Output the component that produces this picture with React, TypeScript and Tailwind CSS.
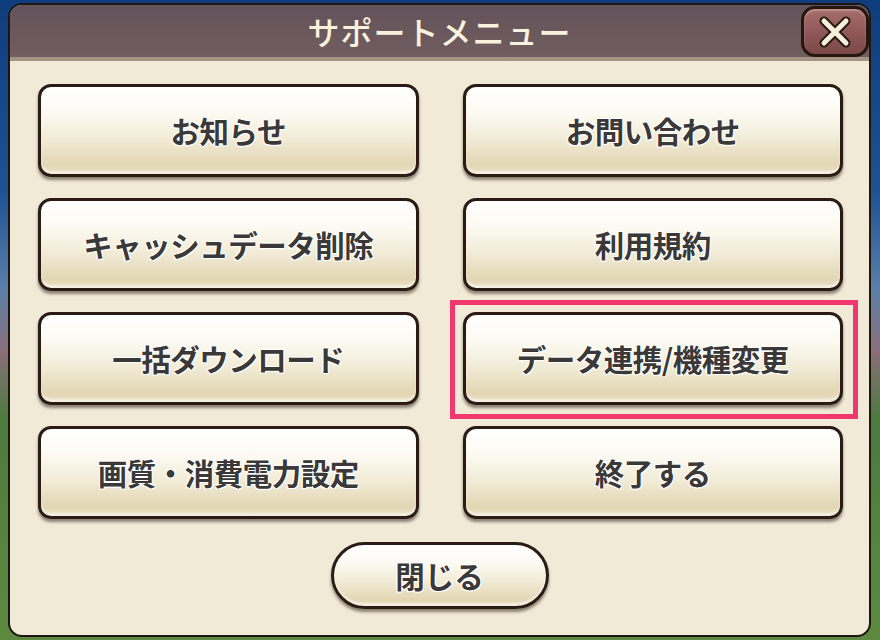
import React from "react";

const font = { fontFamily: '"Noto Sans CJK JP", "Noto Sans", sans-serif' };

const items = [
  "お知らせ",
  "お問い合わせ",
  "キャッシュデータ削除",
  "利用規約",
  "一括ダウンロード",
  "データ連携/機種変更",
  "画質・消費電力設定",
  "終了する",
];

const btnFace =
  "bg-[linear-gradient(to_bottom,#ffffff_0%,#fcfaf2_30%,#f1ebd6_60%,#e2d6b3_90%,#ebe2c8_100%)] border-[3px] border-[#2a1b15] shadow-[0_3px_3px_rgba(40,25,15,0.5),inset_0_-3px_2px_rgba(255,255,255,0.5)]";

const textGlow =
  "[text-shadow:0_0_2px_#fff,1px_1px_0_#fff,-1px_-1px_0_#fff,1px_-1px_0_#fff,-1px_1px_0_#fff]";

function MenuButton({ label, highlight }: { label: string; highlight?: boolean }) {
  return (
    <div className="relative">
      {highlight && (
        <div className="absolute -left-[13px] -right-[15px] -top-[12px] -bottom-[14px] border-[5px] border-[#f0386e] pointer-events-none" />
      )}
      <button
        className={`${btnFace} w-full h-[93px] rounded-[13px] flex items-center justify-center text-[29.5px] font-bold tracking-[-0.5px] text-[#3b3838] ${textGlow}`}
        style={font}
      >
        {label}
      </button>
    </div>
  );
}

function CloseIcon() {
  return (
    <svg width="36" height="36" viewBox="0 0 36 36">
      <path d="M7 7 L29 29 M29 7 L7 29" stroke="#2a1a16" strokeWidth="9" strokeLinecap="round" />
      <path d="M7 7 L29 29 M29 7 L7 29" stroke="#f7f0d8" strokeWidth="5" strokeLinecap="round" />
    </svg>
  );
}

export default function App() {
  return (
    <div className="w-[880px] h-[640px] overflow-hidden bg-[linear-gradient(to_bottom,#0f3c7c_0%,#1d5294_30%,#5a7fa8_45%,#8a6e7a_55%,#4d7a3e_65%,#5d8a3f_100%)] pt-[3px] pl-[8px]">
      <div className="w-[863px] h-[634px] rounded-[14px] border-[2px] border-[#1e1612] bg-[#f0ead7] overflow-hidden flex flex-col">
        <div className="relative h-[56px] shrink-0 bg-[linear-gradient(to_bottom,#63525a,#715d5f)] border-b-[4px] border-[#a39581] flex items-center justify-center">
          <span
            className="text-[32px] font-medium text-[#f7f1de] tracking-[1px]"
            style={font}
          >
            サポートメニュー
          </span>
          <div className="absolute right-[0px] top-[1px] w-[68px] h-[51px] rounded-[14px] border-[3px] border-[#24170f] bg-[linear-gradient(to_bottom,#a56d6c,#8d5656_60%,#7c4848)] shadow-[inset_0_2px_2px_rgba(255,220,210,0.35)] flex items-center justify-center">
            <CloseIcon />
          </div>
        </div>
        <div className="grid grid-cols-2 gap-x-[44px] gap-y-[21px] pl-[28px] pr-[26px] pt-[23px]">
          {items.map((label, i) => (
            <MenuButton key={label} label={label} highlight={i === 5} />
          ))}
        </div>
        <div className="flex justify-center pt-[23px]">
          <button
            className={`${btnFace} w-[218px] h-[67px] rounded-full flex items-center justify-center text-[29.5px] font-bold text-[#3b3838] ${textGlow}`}
            style={font}
          >
            閉じる
          </button>
        </div>
      </div>
    </div>
  );
}
